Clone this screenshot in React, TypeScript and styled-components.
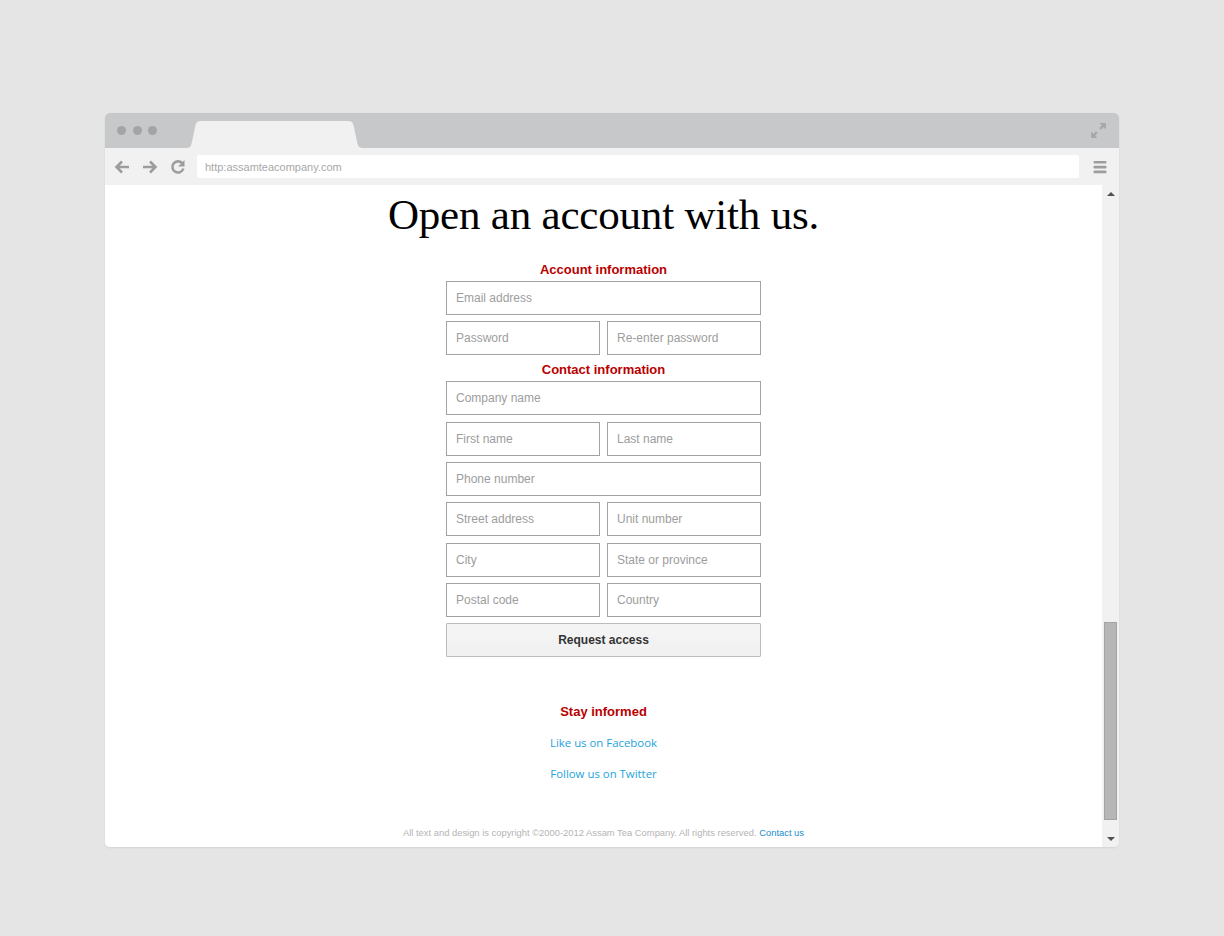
import React from "react";
import styled, { createGlobalStyle } from "styled-components";

const GlobalStyle = createGlobalStyle`
  html, body { margin: 0; padding: 0; background: #e5e5e5; }
  body { font-family: "Liberation Sans", Arial, sans-serif; }
  * { box-sizing: border-box; }
`;

const Page = styled.div`
  display: flex;
  justify-content: center;
  align-items: flex-start;
  padding-top: 113px;
  min-height: 936px;
`;

const Window = styled.div`
  width: 1014px;
  border-radius: 5px;
  overflow: hidden;
  background: #fff;
  box-shadow: 0 1px 2px rgba(0, 0, 0, 0.08);
  display: flex;
  flex-direction: column;
`;

const TitleBar = styled.div`
  height: 35px;
  background: #c6c8ca;
  display: flex;
  align-items: flex-end;
  padding: 0 12px 0 12px;
`;

const Dots = styled.div`
  display: flex;
  gap: 6.5px;
  align-self: center;
  margin-top: -1px;
`;

const Dot = styled.span`
  width: 9px;
  height: 9px;
  border-radius: 50%;
  background: #a2a4a6;
`;

const TabShape = styled.svg`
  margin-left: 29px;
  display: block;
`;

const ExpandIcon = styled.svg`
  margin-left: auto;
  align-self: flex-start;
  margin-top: 9px;
`;

const Toolbar = styled.div`
  height: 37px;
  background: #f1f1f1;
  display: flex;
  align-items: center;
  padding: 0 12px 0 8px;
`;

const NavButton = styled.svg`
  display: block;
  margin-right: 10px;
`;

const UrlField = styled.div`
  flex: 1;
  height: 23px;
  background: #fff;
  border-radius: 2px;
  margin-right: 14px;
  display: flex;
  align-items: center;
  padding-left: 8px;
  font-family: "Liberation Sans", Arial, sans-serif;
  font-size: 11px;
  color: #a8a8a8;
`;

const Menu = styled.svg`
  display: block;
`;

const Viewport = styled.div`
  display: flex;
  height: 662px;
`;

const Content = styled.main`
  flex: 1;
  background: #fff;
  display: flex;
  flex-direction: column;
  align-items: center;
  padding-top: 5px;
`;

const Title = styled.h1`
  margin: 0;
  font-family: "Liberation Serif", "Times New Roman", serif;
  font-weight: normal;
  font-size: 43px;
  line-height: 50px;
  color: #000;
  letter-spacing: -0.2px;
`;

const Form = styled.form`
  width: 315px;
  display: flex;
  flex-direction: column;
`;

const SectionTitle = styled.h2<{ $top: number }>`
  margin: ${(p) => p.$top}px 0 0;
  font-family: "Liberation Sans", Arial, sans-serif;
  font-size: 13px;
  font-weight: bold;
  line-height: 22px;
  color: #b80000;
  text-align: center;
`;

const FieldGrid = styled.div`
  display: grid;
  grid-template-columns: 1fr 1fr;
  column-gap: 7px;
  row-gap: 6.33px;
`;

const Input = styled.input<{ $wide?: boolean }>`
  grid-column: ${(p) => (p.$wide ? "1 / -1" : "auto")};
  height: 34px;
  width: 100%;
  border: 1px solid #a3a3a3;
  border-radius: 0;
  padding: 0 9px;
  font-family: "Liberation Sans", Arial, sans-serif;
  font-size: 12px;
  color: #333;
  background: #fff;
  outline: none;
  &::placeholder { color: #9d9d9d; }
`;

const SubmitButton = styled.button`
  grid-column: 1 / -1;
  height: 34px;
  border: 1px solid #bcbcbc;
  border-radius: 1px;
  background: linear-gradient(#f5f5f5, #f0f0f0);
  font-family: "Liberation Sans", Arial, sans-serif;
  font-size: 12px;
  font-weight: bold;
  color: #333;
  cursor: pointer;
`;

const Informed = styled.section`
  display: flex;
  flex-direction: column;
  align-items: center;
  margin-top: 45px;
`;

const InformedTitle = styled.h3`
  margin: 0;
  font-family: "Liberation Sans", Arial, sans-serif;
  font-size: 13px;
  font-weight: bold;
  line-height: 20px;
  color: #b80000;
`;

const SocialLink = styled.a<{ $top: number }>`
  margin-top: ${(p) => p.$top}px;
  font-family: "Open Sans", "Liberation Sans", sans-serif;
  font-size: 11.4px;
  line-height: 20px;
  color: #1ea3dc;
  text-decoration: none;
`;

const Footer = styled.footer`
  margin-top: 42px;
  font-family: "Liberation Sans", Arial, sans-serif;
  font-size: 9.4px;
  line-height: 14px;
  color: #b4b4b4;
`;

const FooterLink = styled.a`
  color: #1a8ccf;
  text-decoration: none;
`;

const Scrollbar = styled.div`
  width: 17px;
  background: #f1f1f1;
  display: flex;
  flex-direction: column;
  align-items: center;
`;

const ArrowBox = styled.div`
  height: 17px;
  display: flex;
  align-items: center;
  justify-content: center;
  width: 100%;
`;

const Track = styled.div`
  flex: 1;
  width: 100%;
  display: flex;
  flex-direction: column;
  justify-content: flex-end;
  align-items: center;
  padding-bottom: 10px;
`;

const Thumb = styled.div`
  width: 13px;
  height: 198px;
  background: #b6b6b6;
  border: 1px solid #a3a3a3;
`;

const Triangle = styled.span<{ $down?: boolean }>`
  width: 0;
  height: 0;
  border-left: 4px solid transparent;
  border-right: 4px solid transparent;
  ${(p) =>
    p.$down
      ? "border-top: 4px solid #505050;"
      : "border-bottom: 4px solid #505050;"}
`;

const fieldsA: { ph: string; wide?: boolean }[] = [
  { ph: "Email address", wide: true },
  { ph: "Password" },
  { ph: "Re-enter password" },
];

const fieldsB: { ph: string; wide?: boolean }[] = [
  { ph: "Company name", wide: true },
  { ph: "First name" },
  { ph: "Last name" },
  { ph: "Phone number", wide: true },
  { ph: "Street address" },
  { ph: "Unit number" },
  { ph: "City" },
  { ph: "State or province" },
  { ph: "Postal code" },
  { ph: "Country" },
];

const iconColor = "#9d9d9d";

export default function App() {
  return (
    <>
      <GlobalStyle />
      <Page>
        <Window>
          <TitleBar>
            <Dots>
              <Dot />
              <Dot />
              <Dot />
            </Dots>
            <TabShape width="177" height="27" viewBox="0 0 177 27">
              <path
                d="M0 27 C3 27 4.5 26 5.5 23 L9.5 4 C10.3 1.3 11.5 0 14.5 0 L162.5 0 C165.5 0 166.7 1.3 167.5 4 L171.5 23 C172.5 26 174 27 177 27 Z"
                fill="#f1f1f1"
              />
            </TabShape>
            <ExpandIcon width="17" height="17" viewBox="0 0 16 16">
              <path d="M9 1 H15 V7 Z" fill="#a6a8aa" />
              <path d="M13.5 2.5 L9.5 6.5" stroke="#a6a8aa" strokeWidth="2.4" />
              <path d="M1 9 V15 H7 Z" fill="#a6a8aa" />
              <path d="M2.5 13.5 L6.5 9.5" stroke="#a6a8aa" strokeWidth="2.4" />
            </ExpandIcon>
          </TitleBar>
          <Toolbar>
            <NavButton width="18" height="18" viewBox="0 0 18 18">
              <path
                d="M16 9 H4 M9 3.5 L3.5 9 L9 14.5"
                stroke={iconColor}
                strokeWidth="2.6"
                fill="none"
              />
            </NavButton>
            <NavButton width="18" height="18" viewBox="0 0 18 18">
              <path
                d="M2 9 H14 M9 3.5 L14.5 9 L9 14.5"
                stroke={iconColor}
                strokeWidth="2.6"
                fill="none"
              />
            </NavButton>
            <NavButton width="18" height="18" viewBox="0 0 18 18">
              <path
                d="M13.2 5.2 A5.6 5.6 0 1 0 14.4 10.5"
                stroke={iconColor}
                strokeWidth="2.6"
                fill="none"
              />
              <path d="M15.5 2 V8.5 H9 Z" fill={iconColor} />
            </NavButton>
            <UrlField>http:assamteacompany.com</UrlField>
            <Menu width="14" height="14" viewBox="0 0 14 14">
              <rect x="0.5" y="1" width="13" height="2.6" rx="1" fill={iconColor} />
              <rect x="0.5" y="5.8" width="13" height="2.6" rx="1" fill={iconColor} />
              <rect x="0.5" y="10.6" width="13" height="2.6" rx="1" fill={iconColor} />
            </Menu>
          </Toolbar>
          <Viewport>
            <Content>
              <Title>Open an account with us.</Title>
              <Form onSubmit={(e) => e.preventDefault()}>
                <SectionTitle $top={19}>Account information</SectionTitle>
                <FieldGrid>
                  {fieldsA.map((f) => (
                    <Input
                      key={f.ph}
                      $wide={f.wide}
                      placeholder={f.ph}
                      type={f.ph.toLowerCase().includes("password") ? "password" : "text"}
                    />
                  ))}
                </FieldGrid>
                <SectionTitle $top={4}>Contact information</SectionTitle>
                <FieldGrid>
                  {fieldsB.map((f) => (
                    <Input key={f.ph} $wide={f.wide} placeholder={f.ph} />
                  ))}
                  <SubmitButton type="submit">Request access</SubmitButton>
                </FieldGrid>
              </Form>
              <Informed>
                <InformedTitle>Stay informed</InformedTitle>
                <SocialLink $top={11} href="#">
                  Like us on Facebook
                </SocialLink>
                <SocialLink $top={11} href="#">
                  Follow us on Twitter
                </SocialLink>
              </Informed>
              <Footer>
                All text and design is copyright ©2000-2012 Assam Tea Company. All
                rights reserved. <FooterLink href="#">Contact us</FooterLink>
              </Footer>
            </Content>
            <Scrollbar>
              <ArrowBox>
                <Triangle />
              </ArrowBox>
              <Track>
                <Thumb />
              </Track>
              <ArrowBox>
                <Triangle $down />
              </ArrowBox>
            </Scrollbar>
          </Viewport>
        </Window>
      </Page>
    </>
  );
}
